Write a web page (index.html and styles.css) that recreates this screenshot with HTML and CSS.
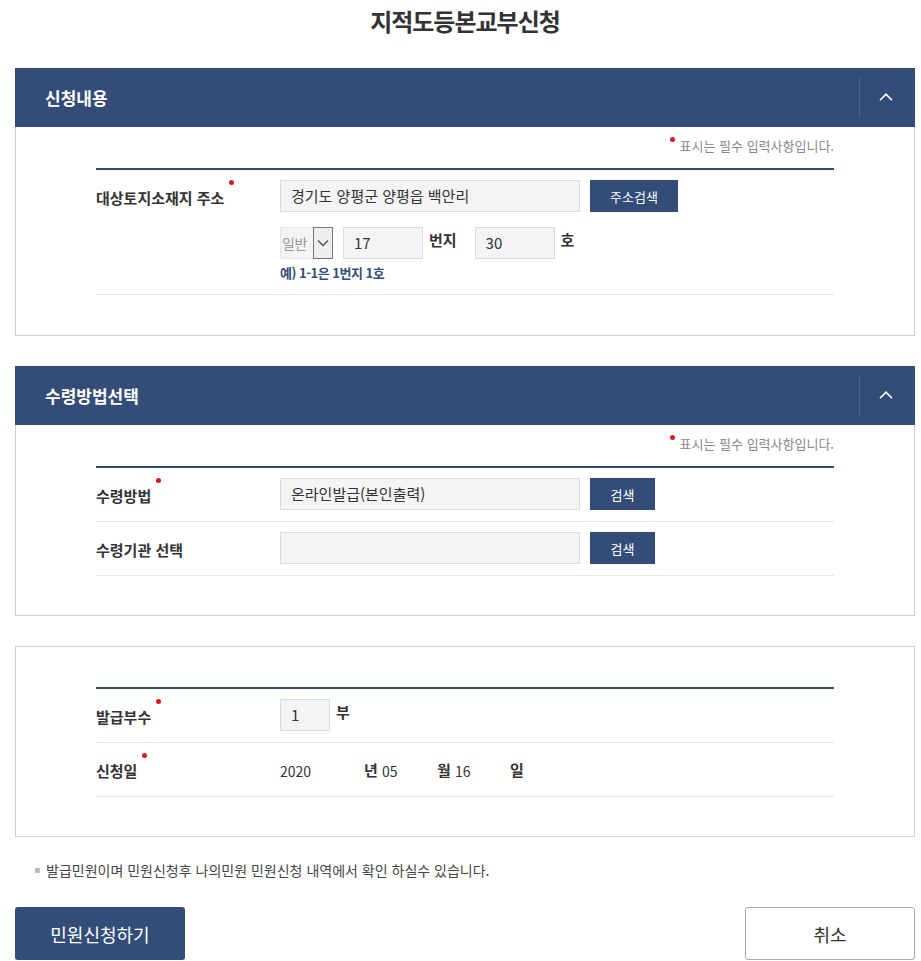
FILE: index.html
```html
<!DOCTYPE html>
<html lang="ko">
<head>
<meta charset="utf-8">
<title>지적도등본교부신청</title>
<link rel="stylesheet" href="styles.css">
</head>
<body>
<div class="page">
  <h1 class="title">지적도등본교부신청</h1>

  <section class="panel">
    <div class="panel-head">
      <h2 class="panel-title">신청내용</h2>
      <button class="toggle" type="button" aria-label="접기">
        <svg width="14" height="8" viewBox="0 0 14 8"><path d="M1 7.2 L7 1.2 L13 7.2" fill="none" stroke="#fff" stroke-width="1.6"/></svg>
      </button>
    </div>
    <div class="panel-body">
      <p class="req-note"><span class="dot-inline"></span>표시는 필수 입력사항입니다.</p>
      <div class="form">
        <div class="row row-address">
          <div class="label"><span class="req">대상토지소재지 주소</span></div>
          <div class="field">
            <div class="line">
              <div class="input wide">경기도 양평군 양평읍 백안리</div>
              <button class="btn-blue btn-addr" type="button">주소검색</button>
            </div>
            <div class="line line2">
              <div class="select"><span class="select-text">일반</span><span class="select-arrow"><svg width="12" height="8" viewBox="0 0 12 8"><path d="M1 1.5 L6 6.5 L11 1.5" fill="none" stroke="#555" stroke-width="1.5"/></svg></span></div>
              <div class="input small">17</div>
              <span class="unit">번지</span>
              <div class="input small">30</div>
              <span class="unit">호</span>
            </div>
            <p class="example">예) 1-1은 1번지 1호</p>
          </div>
        </div>
      </div>
    </div>
  </section>

  <section class="panel">
    <div class="panel-head">
      <h2 class="panel-title">수령방법선택</h2>
      <button class="toggle" type="button" aria-label="접기">
        <svg width="14" height="8" viewBox="0 0 14 8"><path d="M1 7.2 L7 1.2 L13 7.2" fill="none" stroke="#fff" stroke-width="1.6"/></svg>
      </button>
    </div>
    <div class="panel-body compact">
      <p class="req-note"><span class="dot-inline"></span>표시는 필수 입력사항입니다.</p>
      <div class="form">
        <div class="row">
          <div class="label"><span class="req">수령방법</span></div>
          <div class="field">
            <div class="line">
              <div class="input wide">온라인발급(본인출력)</div>
              <button class="btn-blue" type="button">검색</button>
            </div>
          </div>
        </div>
        <div class="row">
          <div class="label"><span>수령기관 선택</span></div>
          <div class="field">
            <div class="line">
              <div class="input wide"></div>
              <button class="btn-blue" type="button">검색</button>
            </div>
          </div>
        </div>
      </div>
    </div>
  </section>

  <section class="panel">
    <div class="panel-body plain compact">
      <div class="form">
        <div class="row">
          <div class="label"><span class="req">발급부수</span></div>
          <div class="field">
            <div class="line">
              <div class="input tiny">1</div>
              <span class="unit unit-top">부</span>
            </div>
          </div>
        </div>
        <div class="row">
          <div class="label"><span class="req">신청일</span></div>
          <div class="field">
            <div class="line date">
              <span class="dval y">2020</span><span class="dunit">년</span><span class="dval">05</span><span class="dunit">월</span><span class="dval">16</span><span class="dunit">일</span>
            </div>
          </div>
        </div>
      </div>
    </div>
  </section>

  <p class="info"><span class="sq"></span>발급민원이며 민원신청후 나의민원 민원신청 내역에서 확인 하실수 있습니다.</p>

  <div class="actions">
    <button class="btn-submit" type="button">민원신청하기</button>
    <button class="btn-cancel" type="button">취소</button>
  </div>
</div>
</body>
</html>
```

FILE: styles.css
```css
* { box-sizing: border-box; }
html, body { margin: 0; padding: 0; background: #fff; }
body {
  font-family: "Noto Sans CJK KR", "Noto Sans", "Liberation Sans", sans-serif;
  color: #333;
}
.page {
  width: 900px;
  margin-left: 15px;
}
.title {
  margin: 0;
  padding-top: 5px;
  height: 68px;
  text-align: center;
  font-size: 24px;
  line-height: 32px;
  font-weight: 700;
  color: #333;
  letter-spacing: -1px;
}
.panel {
  margin-bottom: 30px;
}
.panel-head {
  height: 59px;
  background: #344d78;
  display: flex;
  align-items: center;
  justify-content: space-between;
  padding-left: 30px;
}
.panel-title {
  margin: 0;
  font-size: 17px;
  font-weight: 700;
  color: #fff;
  letter-spacing: 0;
  line-height: 24px;
}
.toggle {
  width: 56px;
  height: 40px;
  border: 0;
  border-left: 1px solid #4b6390;
  background: transparent;
  display: flex;
  align-items: center;
  justify-content: center;
  padding: 0 4px 2px 0;
  cursor: pointer;
}
.panel-body {
  border: 1px solid #cfcfcf;
  border-top: 0;
  padding: 6px 80px 40px 80px;
}
.panel-body.compact {
  padding-bottom: 39px;
}
.panel-body.plain {
  border-top: 1px solid #cfcfcf;
  padding-top: 40px;
}
.req-note {
  margin: 0;
  height: 35px;
  padding-top: 3px;
  text-align: right;
  font-size: 13px;
  line-height: 20px;
  color: #888;
  letter-spacing: 0;
}
.dot-inline {
  display: inline-block;
  width: 5px;
  height: 5px;
  border-radius: 50%;
  background: #e0141e;
  vertical-align: top;
  margin: 1px 5px 0 0;
}
.form {
  border-top: 2px solid #344d78;
}
.row {
  display: flex;
  align-items: flex-start;
  border-bottom: 1px solid #e6e6e6;
  padding: 10px 0 11px;
}
.label {
  width: 184px;
  flex: none;
  height: 32px;
  display: flex;
  align-items: center;
  font-size: 15px;
  font-weight: 700;
  color: #333;
  letter-spacing: 0;
  padding-top: 3px;
}
.req {
  position: relative;
}
.req::after {
  content: "";
  position: absolute;
  right: -10px;
  top: -7px;
  width: 5px;
  height: 5px;
  border-radius: 50%;
  background: #e0141e;
}
.field { flex: 1; }
.line {
  display: flex;
  align-items: center;
  height: 32px;
}
.line2 { margin-top: 15px; }
.input {
  height: 32px;
  background: #f4f4f4;
  border: 1px solid #dcdcdc;
  font-size: 15px;
  line-height: 30px;
  padding: 0 10px;
  color: #333;
}
.input.wide { width: 300px; }
.input.small { width: 80px; }
.input.tiny { width: 50px; }
.btn-blue {
  margin-left: 10px;
  height: 32px;
  min-width: 65px;
  padding: 0 14px;
  border: 0;
  background: #344d78;
  color: #fff;
  font-family: inherit;
  font-size: 13px;
  letter-spacing: 0;
}
.btn-addr { width: 88px; }
.select {
  display: flex;
  height: 32px;
  width: 53px;
  margin-right: 10px;
  background: #f4f4f4;
  border: 1px solid #e6e6e6;
}
.select-text {
  flex: 1;
  font-size: 14px;
  line-height: 30px;
  color: #999;
  padding-left: 1px;
  letter-spacing: -0.5px;
}
.select-arrow {
  width: 20px;
  border: 1px solid #777;
  background: #eee;
  display: flex;
  align-items: center;
  justify-content: center;
  margin: -1px -1px -1px 0;
}
.unit {
  font-size: 15px;
  font-weight: 700;
  color: #333;
  margin: -8px 18px 0 6px;
}
.unit-top { margin-top: -8px; }
.example {
  margin: 4px 0 0;
  font-size: 13px;
  font-weight: 700;
  color: #344d78;
  line-height: 20px;
  letter-spacing: -0.5px;
}
.date {
  height: 32px;
}
.dval {
  font-size: 14px;
  color: #333;
  width: 55px;
  display: inline-block;
  margin-top: 4px;
}
.dval.y { width: 84px; }
.dunit {
  font-size: 15px;
  font-weight: 700;
  color: #333;
  width: 18px;
  display: inline-block;
}
.info {
  margin: -7px 0 0;
  padding-left: 20px;
  font-size: 14px;
  line-height: 20px;
  color: #444;
  letter-spacing: 0;
  display: flex;
  align-items: center;
  height: 20px;
}
.sq {
  width: 5px;
  height: 5px;
  background: #bbb;
  margin-right: 6px;
}
.actions {
  display: flex;
  justify-content: space-between;
  margin-top: 27px;
}
.btn-submit, .btn-cancel {
  width: 170px;
  height: 53px;
  border-radius: 3px;
  font-family: inherit;
  font-size: 18px;
  letter-spacing: 0;
}
.btn-submit {
  background: #344d78;
  color: #fff;
  border: 0;
}
.btn-cancel {
  background: #fff;
  color: #333;
  border: 1px solid #aaa;
}
```
